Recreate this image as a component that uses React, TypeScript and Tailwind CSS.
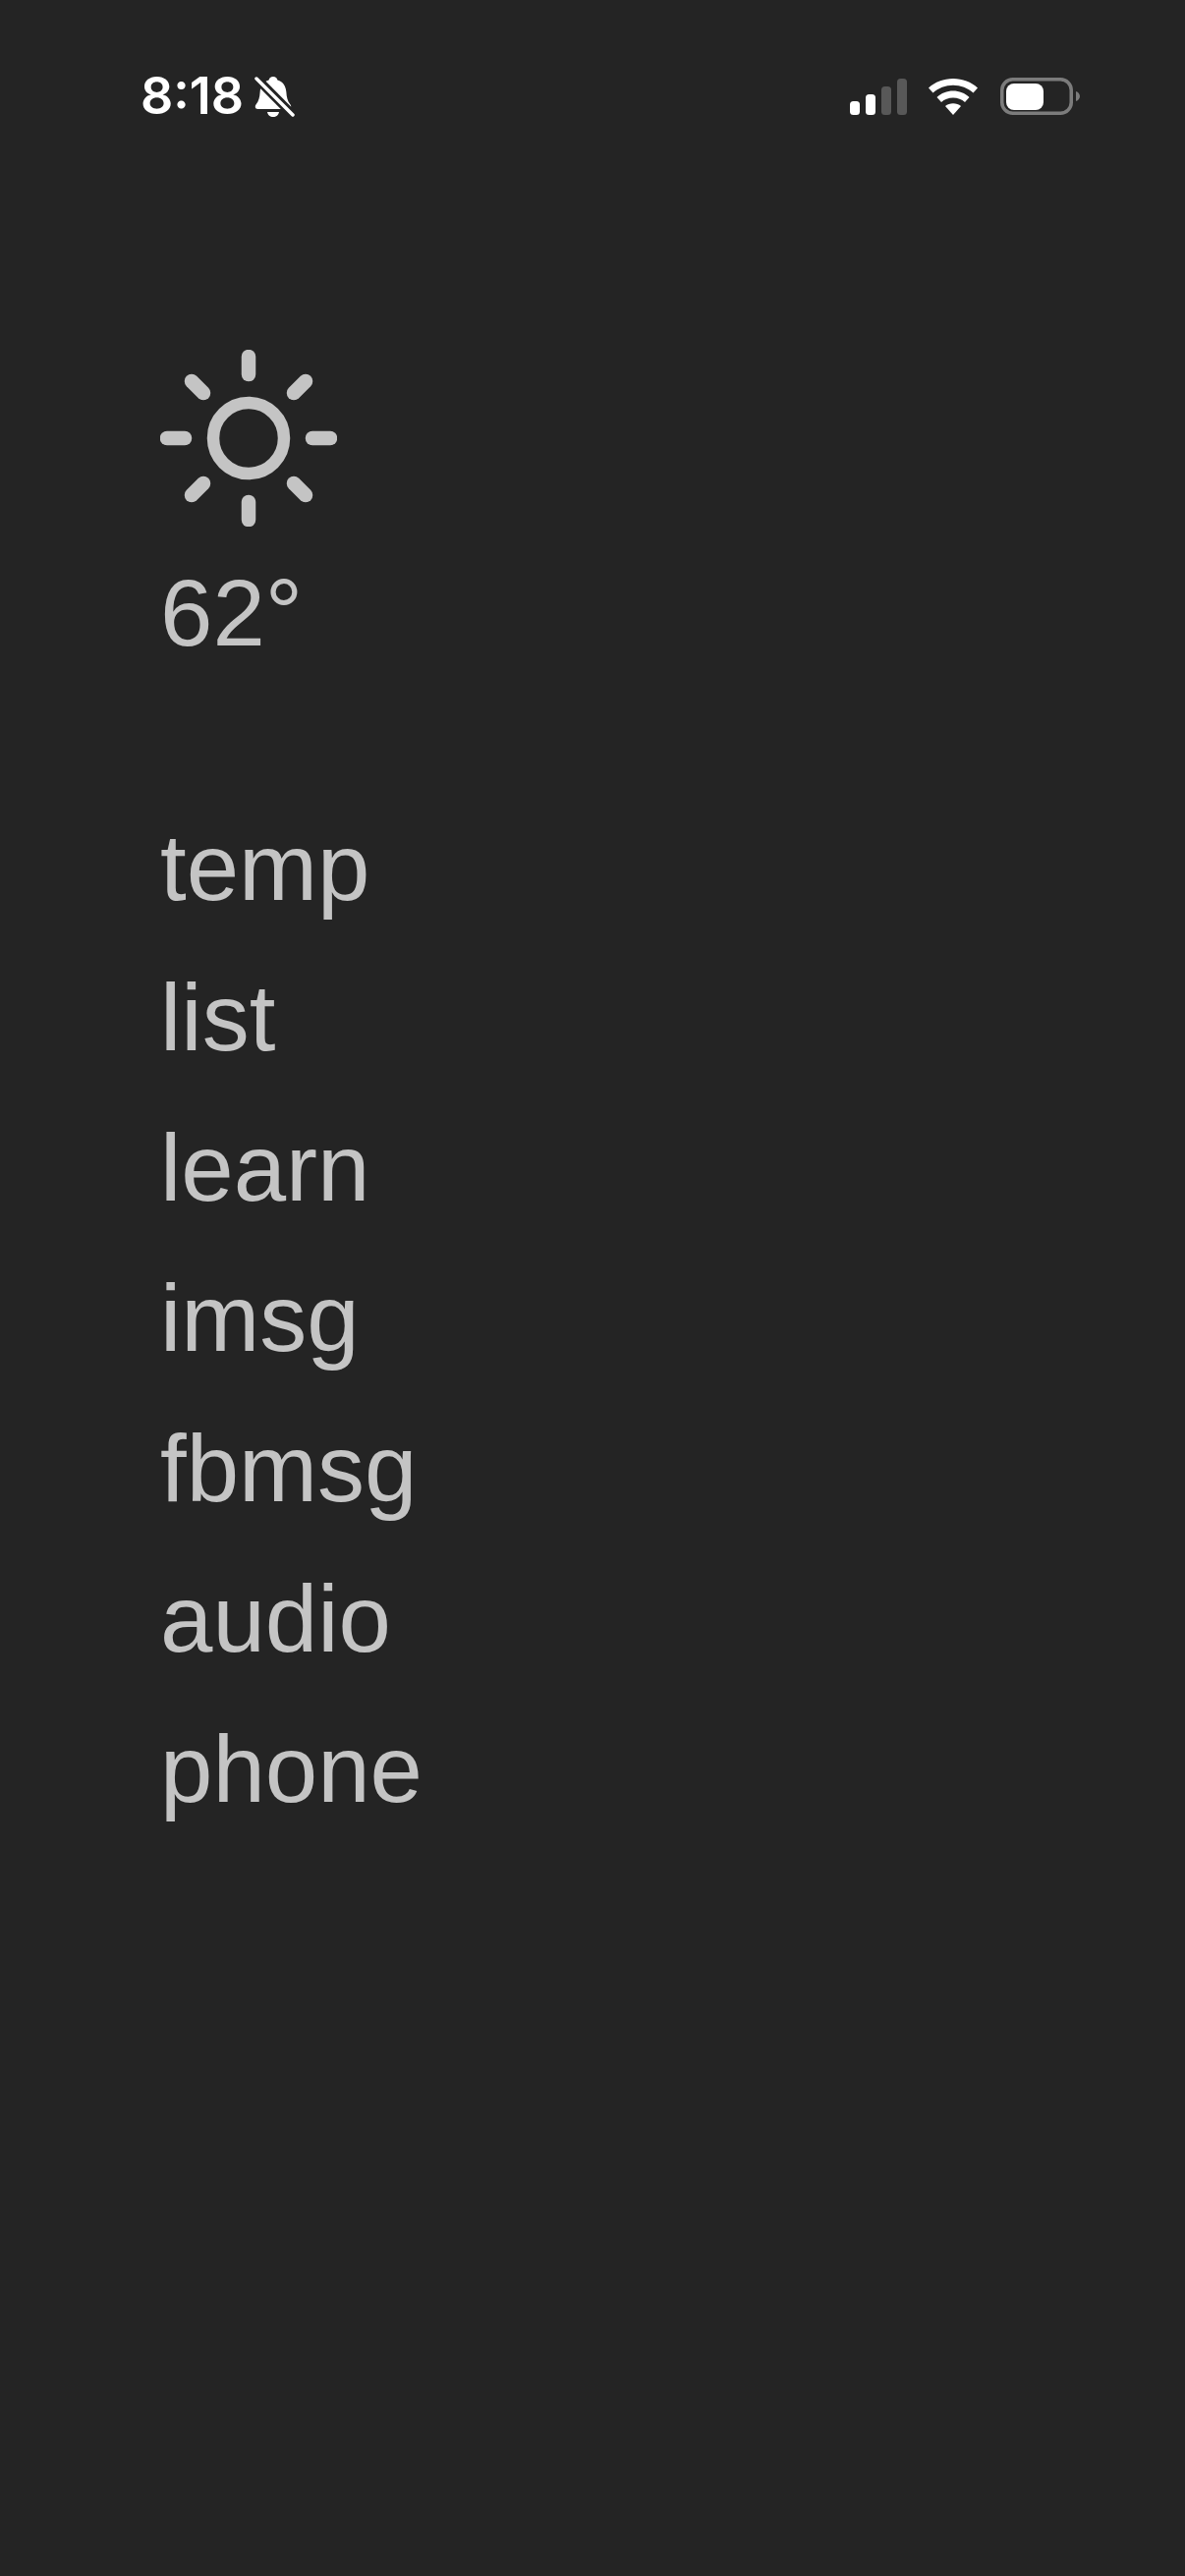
const items = ['temp', 'list', 'learn', 'imsg', 'fbmsg', 'audio', 'phone'];

function BellOff() {
  return (
    <svg width="42" height="44" viewBox="0 0 42 44" className="block ml-[10px]">
      <path d="M20 2c2.400 0 4 1.400 4.400 3.400 5.800 1.600 8.600 6.400 9 12.600.3 4.600 1.200 9 3.800 12 1.600 1.800 1.400 5-1.600 5H4.400c-3 0-3.200-3.200-1.600-5 2.600-3 3.500-7.400 3.800-12 .4-6.200 3.200-11 9-12.600C16 3.400 17.600 2 20 2z" fill="#ffffff" />
      <path d="M14 38h12c-.4 3-3 5-6 5s-5.600-2-6-5z" fill="#ffffff" />
      <path d="M1 1.500 42 43" stroke="#242424" strokeWidth="9" />
      <path d="M3 4 40 41" stroke="#ffffff" strokeWidth="3.500" strokeLinecap="round" />
    </svg>
  );
}

function SignalIcon() {
  return (
    <svg width="58" height="37" viewBox="0 0 58 37" className="block">
      <rect x="0" y="23" width="10" height="14" rx="3.500" fill="#ffffff" />
      <rect x="16" y="16" width="10" height="21" rx="3.500" fill="#ffffff" />
      <rect x="32" y="8" width="10" height="29" rx="3.500" fill="#585858" />
      <rect x="48" y="0" width="10" height="37" rx="3.500" fill="#585858" />
    </svg>
  );
}

function WifiIcon() {
  return (
    <svg width="50" height="37" viewBox="0 0 50 37" className="block">
      <path d="M0 9.500C6.500 3.500 15.500 0 25 0s18.500 3.500 25 9.500l-4.500 5C40 9.500 32.800 6.700 25 6.700S10 9.500 4.500 14.500z" fill="#ffffff" />
      <path d="M8.500 19C13 15 18.800 12.600 25 12.600S37 15 41.500 19l-4.500 5C33.800 21.200 29.600 19.500 25 19.500S16.200 21.200 13 24z" fill="#ffffff" />
      <path d="M17 28c2.200-1.700 5-2.700 8-2.700s5.800 1 8 2.700l-8 9z" fill="#ffffff" />
    </svg>
  );
}

function BatteryIcon() {
  return (
    <svg width="81" height="38" viewBox="0 0 81 38" className="block ml-[23px]">
      <rect x="1.750" y="1.750" width="70.500" height="34.500" rx="11" fill="none" stroke="#7c7c7c" strokeWidth="3.500" />
      <rect x="6" y="6" width="38" height="27" rx="8" fill="#ffffff" />
      <path d="M77 14c2.500.8 4 2.800 4 5s-1.500 4.200-4 5z" fill="#7c7c7c" />
    </svg>
  );
}

function SunIcon() {
  return (
    <svg width="180" height="180" viewBox="0 0 180 180" className="block" stroke="#c4c4c4" fill="none" strokeLinecap="round">
      <circle cx="90" cy="90" r="36" strokeWidth="12.500" />
      <g strokeWidth="14.500">
        <path d="M90 7v18" />
        <path d="M90 155v18" />
        <path d="M7 90h18" />
        <path d="M155 90h18" />
        <path d="M32 32l12 12" />
        <path d="M148 32l-12 12" />
        <path d="M32 148l12-12" />
        <path d="M148 148l-12-12" />
      </g>
    </svg>
  );
}

export default function App() {
  return (
    <div className="min-h-[2622px] w-full bg-[#242424] font-['Liberation_Sans',Arial,sans-serif] text-[#c4c4c4]">
      {/* Status bar */}
      <div className="flex items-center justify-between pt-[76px] pl-[143px] pr-[107px]">
        <div className="flex items-center">
          <span className="font-['Inter',sans-serif] text-[52px] leading-[44px] font-semibold text-white">8:18</span>
          <BellOff />
        </div>
        <div className="flex items-center">
          <SignalIcon />
          <div className="ml-[22px]">
            <WifiIcon />
          </div>
          <BatteryIcon />
        </div>
      </div>

      {/* Weather */}
      <div className="pl-[163px] pt-[236px]">
        <SunIcon />
        <div className="text-[96px] leading-[110px] mt-[33px]">62°</div>
      </div>

      {/* Links */}
      <div className="flex flex-col pl-[163px] pt-[127px]">
        {items.map((item) => (
          <div key={item} className="text-[96px] leading-[153px]">
            {item}
          </div>
        ))}
      </div>
    </div>
  );
}
